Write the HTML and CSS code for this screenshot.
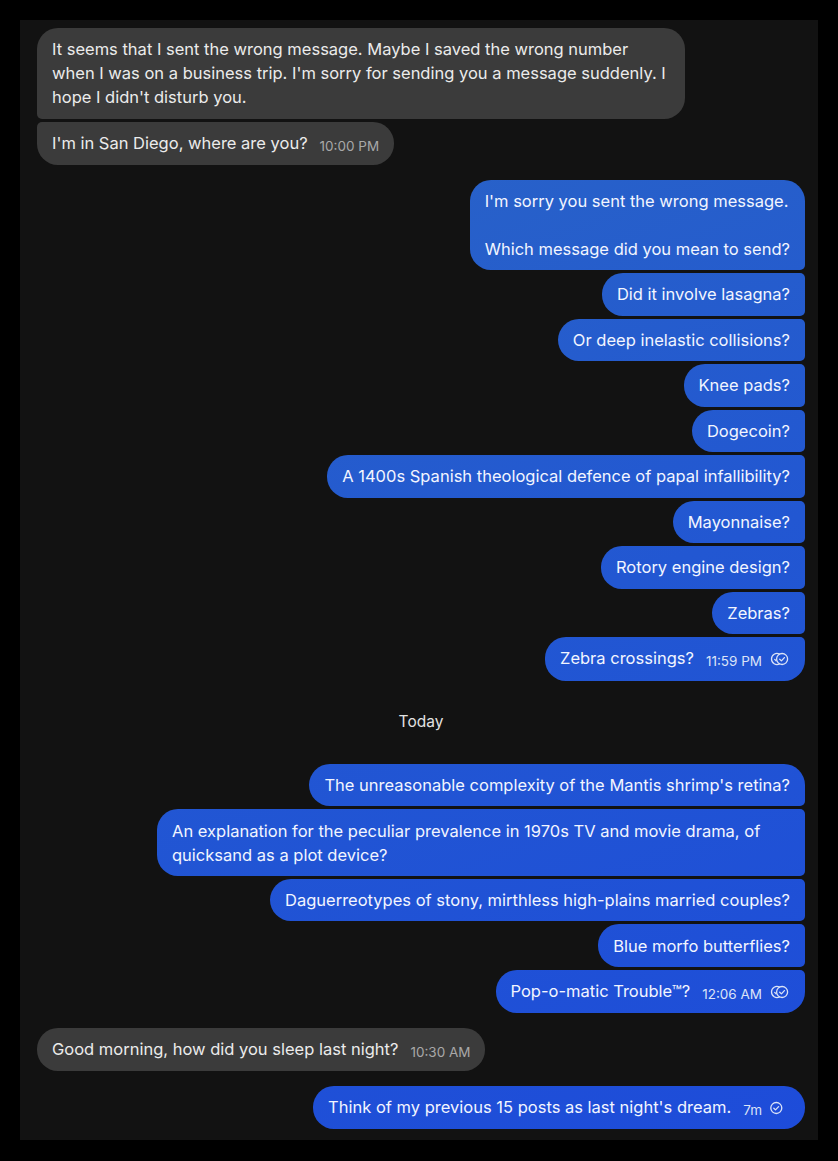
FILE: index.html
```html
<!DOCTYPE html>
<html lang="en">
<head>
<meta charset="utf-8">
<title>Chat</title>
<link rel="stylesheet" href="styles.css">
</head>
<body>
<div class="panel">
  <div class="group in">
    <div class="msg">It seems that I sent the wrong message. Maybe I saved the wrong number when I was on a business trip. I'm sorry for sending you a message suddenly. I hope I didn't disturb you.</div>
    <div class="msg">I'm in San Diego, where are you?<span class="time">10:00 PM</span></div>
  </div>

  <div class="group out">
    <div class="msg">I'm sorry you sent the wrong message.<br><br>Which message did you mean to send?</div>
    <div class="msg">Did it involve lasagna?</div>
    <div class="msg">Or deep inelastic collisions?</div>
    <div class="msg">Knee pads?</div>
    <div class="msg">Dogecoin?</div>
    <div class="msg">A 1400s Spanish theological defence of papal infallibility?</div>
    <div class="msg">Mayonnaise?</div>
    <div class="msg">Rotory engine design?</div>
    <div class="msg">Zebras?</div>
    <div class="msg">Zebra crossings?<span class="time">11:59 PM</span><svg class="tick" viewBox="0 0 20 14" width="21" height="14" aria-hidden="true"><path d="M10 2.1 A5.5 5.5 0 1 0 10 11.9" /><path d="M5.2 7.4 L6.6 8.8" /><circle cx="12.6" cy="7" r="5.5"/><path d="M10.2 7.2 L11.9 8.9 L14.9 5.6"/></svg></div>
  </div>

  <div class="day">Today</div>

  <div class="group out">
    <div class="msg">The unreasonable complexity of the Mantis shrimp's retina?</div>
    <div class="msg">An explanation for the peculiar prevalence in 1970s TV and movie drama, of quicksand as a plot device?</div>
    <div class="msg">Daguerreotypes of stony, mirthless high-plains married couples?</div>
    <div class="msg">Blue morfo butterflies?</div>
    <div class="msg">Pop-o-matic Trouble™?<span class="time">12:06 AM</span><svg class="tick" viewBox="0 0 20 14" width="21" height="14" aria-hidden="true"><path d="M10 2.1 A5.5 5.5 0 1 0 10 11.9" /><path d="M5.2 7.4 L6.6 8.8" /><circle cx="12.6" cy="7" r="5.5"/><path d="M10.2 7.2 L11.9 8.9 L14.9 5.6"/></svg></div>
  </div>

  <div class="group in">
    <div class="msg">Good morning, how did you sleep last night?<span class="time">10:30 AM</span></div>
  </div>

  <div class="group out">
    <div class="msg">Think of my previous 15 posts as last night's dream.<span class="time">7m</span><svg class="tick" viewBox="0 0 20 14" width="21" height="14" aria-hidden="true"><circle cx="6.8" cy="7" r="5.5"/><path d="M4.3 7.2 L6 8.9 L9.1 5.6"/></svg></div>
  </div>
</div>
</body>
</html>
```

FILE: styles.css
```css
html, body {
  margin: 0;
  padding: 0;
  background: #000;
}

body {
  font-family: Inter, "Noto Sans", "Liberation Sans", sans-serif;
  font-size: 16.5px;
  line-height: 24px;
}

.panel {
  margin: 20px;
  height: 1120px;
  box-sizing: border-box;
  background: #121212;
  padding: 8px 13px 11px 17px;
  display: flex;
  flex-direction: column;
  gap: 14.6px;
  overflow: hidden;
}

.group {
  display: flex;
  flex-direction: column;
  gap: 3px;
}

.group.in { align-items: flex-start; }
.group.out { align-items: flex-end; }

.msg {
  max-width: 648px;
  box-sizing: border-box;
  padding: 9.25px 15px;
  border-radius: 21px;
}

.in .msg {
  background: #3b3b3b;
  color: #ebebeb;
}

.out .msg {
  background: linear-gradient(160deg, #2c68c2 0%, #2257d2 55%, #1d4bda 100%) fixed;
  color: #f2f5ff;
}

.in .msg:not(:last-child) { border-bottom-left-radius: 5px; }
.in .msg:not(:first-child) { border-top-left-radius: 5px; }
.out .msg:not(:last-child) { border-bottom-right-radius: 5px; }
.out .msg:not(:first-child) { border-top-right-radius: 5px; }

.time {
  font-size: 13.5px;
  margin-left: 12px;
  position: relative;
  top: 2px;
}

.in .time { color: #a8a8a8; }
.out .time { color: #dbe3f7; }

.tick {
  margin-left: 7px;
  vertical-align: -2px;
  fill: none;
  stroke: #dbe3f7;
  stroke-width: 1.3;
  stroke-linecap: round;
  stroke-linejoin: round;
}

.day {
  text-align: center;
  color: #e2e2e2;
  font-size: 15.5px;
  margin: 15px 0;
}
```
